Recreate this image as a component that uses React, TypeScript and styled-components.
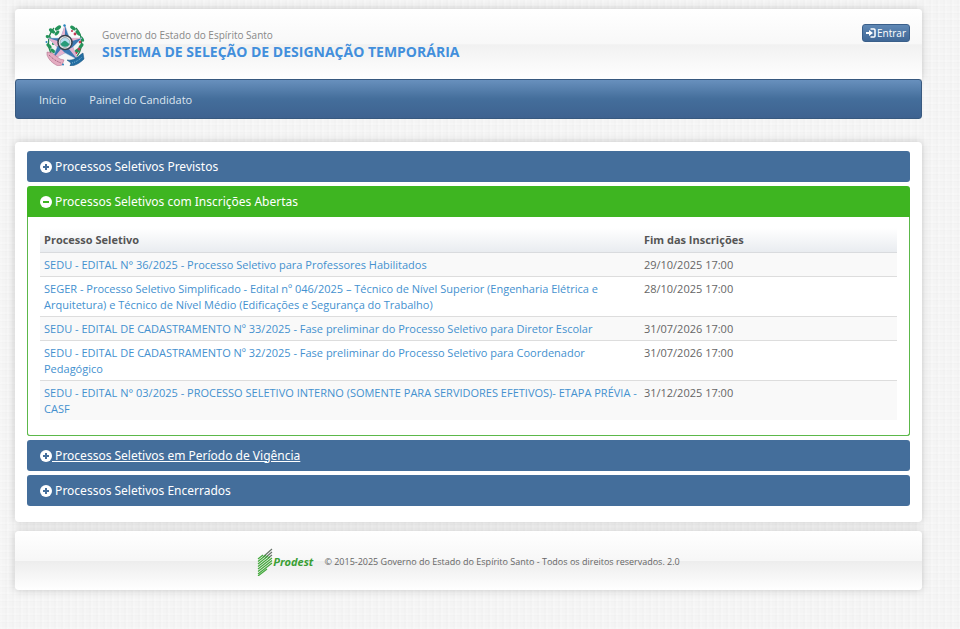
import React, { useState } from "react";
import styled, { createGlobalStyle } from "styled-components";

const GlobalStyle = createGlobalStyle`
  *, *::before, *::after { box-sizing: border-box; }
  body {
    margin: 0;
    font-family: "Open Sans", "Noto Sans", sans-serif;
    font-size: 12px;
    line-height: 16px;
    color: #666;
    background-color: #f4f4f4;
    background-image:
      repeating-linear-gradient(90deg, rgba(255,255,255,.18) 0 2px, transparent 2px 5px, rgba(0,0,0,.006) 5px 7px),
      repeating-linear-gradient(0deg, rgba(255,255,255,.18) 0 2px, transparent 2px 6px, rgba(0,0,0,.006) 6px 7px);
  }
`;

const Page = styled.div`
  padding: 9px 38px 39px 15px;
`;

const shadow = "0 0 8px rgba(0, 0, 0, 0.18)";

const Header = styled.header`
  display: flex;
  align-items: flex-start;
  height: 70px;
  padding: 15px 12px 0 30px;
  border-radius: 4px 4px 0 0;
  background: linear-gradient(#fff 0%, #f8f8f8 50%, #f1f1f1 51%, #fff 100%);
  box-shadow: ${shadow};
`;

const Titles = styled.div`
  flex: 1;
  padding: 3px 0 0 17px;
`;

const Government = styled.div`
  font-size: 10px;
  color: #888;
`;

const SystemName = styled.h1`
  margin: 0;
  font-size: 14px;
  line-height: 18px;
  font-weight: 700;
  color: #428fdc;
`;

const LoginButton = styled.button`
  display: flex;
  align-items: center;
  gap: 1px;
  height: 18px;
  padding: 0 3px;
  border: 1px solid #3a5f8a;
  border-radius: 3px;
  background: linear-gradient(#5f88b5, #3f6796);
  color: #fff;
  font: 10px/16px "Open Sans", sans-serif;
`;

const Nav = styled.nav`
  position: relative;
  display: flex;
  align-items: center;
  gap: 23px;
  height: 40px;
  padding: 2px 23px 0;
  border: 1px solid #38597f;
  border-radius: 3px;
  background: linear-gradient(#6890bd 0%, #446e9b 50%, #3e6290 100%);
`;

const NavLink = styled.a`
  font-size: 11px;
  color: #dde6f0;
  text-decoration: none;
`;

const Main = styled.main`
  display: flex;
  flex-direction: column;
  gap: 4px;
  margin-top: 23px;
  padding: 9px 12px 16px;
  border-radius: 4px;
  background: #fff;
  box-shadow: ${shadow};
`;

const Panel = styled.section<{ $open: boolean }>`
  overflow: hidden;
  border-radius: 3px;
  background: ${(p) => (p.$open ? "#3eb521" : "#446e9b")};
`;

const PanelToggle = styled.button<{ $underlined?: boolean }>`
  display: flex;
  align-items: center;
  width: 100%;
  height: 31px;
  padding: 0 13px;
  border: 0;
  background: none;
  color: #fff;
  font: 12px/18px "Noto Sans", "Open Sans", sans-serif;
  text-align: left;
  white-space: pre;
  text-decoration: ${(p) => (p.$underlined ? "underline" : "none")};
`;

const PanelBody = styled.div`
  padding: 11px 12px 15px;
  border: 1px solid #5cb84a;
  border-top: 0;
  border-radius: 0 0 3px 3px;
  background: #fff;
`;

const Table = styled.table`
  width: 100%;
  table-layout: fixed;
  border-collapse: separate;
  border-spacing: 0;
`;

const HeadCell = styled.th<{ $width: string }>`
  width: ${(p) => p.$width};
  padding: 4px;
  border-bottom: 1px solid #d9dbde;
  background: linear-gradient(#fff, #e9ecf0);
  font-size: 11px;
  font-weight: 700;
  text-align: left;
  color: #555;
`;

const Row = styled.tr`
  &:nth-child(odd) { background: #f9f9f9; }
  &:not(:last-child) > td { border-bottom: 1px solid #ddd; }
`;

const Cell = styled.td`
  padding: 4px 0 3px 4px;
  font-size: 11px;
  vertical-align: top;
`;

const ProcessLink = styled.a`
  color: #4491cf;
  text-decoration: none;
`;

const Footer = styled.footer`
  display: flex;
  align-items: center;
  justify-content: center;
  gap: 11px;
  height: 59px;
  margin-top: 9px;
  padding: 2px 12px 0;
  white-space: nowrap;
  border-radius: 4px;
  background: linear-gradient(#fff 0%, #f7f7f7 50%, #ededed 51%, #fff 100%);
  box-shadow: ${shadow};
`;

const Brand = styled.a`
  display: flex;
  align-items: center;
  color: #3a9f35;
  font-size: 11px;
  font-weight: 700;
  font-style: italic;
  text-decoration: none;
`;

const Copyright = styled.small`
  font-size: 9px;
  color: #666;
`;

function Crest() {
  const star = "M20 1 L24.5 14 L37 14 L28 23 L33 36 L20 29 L7 36 L12 23 L3 14 L15.5 14Z";
  return (
    <svg width="40" height="42" viewBox="0 0 40 42" role="img" aria-label="Brasão do Espírito Santo">
      <path d="M10 34C2 27 1 13 9 4M30 34c8-7 9-21 1-30" fill="none" stroke="#27824f" strokeWidth="1.3" />
      <g fill="#23935a">
        <ellipse cx="13" cy="4" rx="3.5" ry="1.8" transform="rotate(-35 13 4)" />
        <ellipse cx="7" cy="7" rx="3.5" ry="1.8" transform="rotate(35 7 7)" />
        <ellipse cx="12" cy="9" rx="3" ry="1.6" transform="rotate(-50 12 9)" />
        <ellipse cx="3.5" cy="13" rx="3" ry="1.6" transform="rotate(20 3.5 13)" />
        <ellipse cx="4" cy="22" rx="3.2" ry="1.6" transform="rotate(45 4 22)" />
        <ellipse cx="8" cy="27" rx="3.2" ry="1.6" transform="rotate(40 8 27)" />
        <ellipse cx="9" cy="19" rx="2.5" ry="1.4" transform="rotate(-40 9 19)" />
        <ellipse cx="28" cy="4" rx="3.2" ry="1.7" transform="rotate(35 28 4)" />
        <ellipse cx="33" cy="9" rx="3.2" ry="1.7" transform="rotate(50 33 9)" />
        <ellipse cx="37" cy="15" rx="3" ry="1.6" transform="rotate(60 37 15)" />
        <ellipse cx="36" cy="22" rx="3.2" ry="1.7" transform="rotate(-50 36 22)" />
        <ellipse cx="32" cy="27" rx="3.5" ry="1.8" transform="rotate(-40 32 27)" />
      </g>
      <g fill="#c03b55">
        <circle cx="30" cy="10" r="1.4" /><circle cx="35" cy="18" r="1.4" />
        <circle cx="34" cy="25" r="1.5" /><circle cx="27" cy="7" r="1.1" />
        <circle cx="31" cy="29" r="1.3" />
      </g>
      <path d={star} fill="#3c78b2" stroke="#c7dced" strokeWidth=".5" />
      <path d="M20 1v14L15.5 14ZM3 14l13 4-4 5ZM37 14l-13 4 1-4ZM7 36l9-11 4 4ZM33 36l-9-11 4-2Z" fill="#e4b3ce" />
      <circle cx="20" cy="18.5" r="7" fill="#f4f4f4" stroke="#39424e" strokeWidth="1.5" />
      <circle cx="20" cy="18.5" r="5" fill="#b8dfee" stroke="#777" strokeWidth=".5" />
      <path d="M15.5 20c2-1 3-4 5-3s2 2 4 3c-1 3-7 4-9 0Z" fill="#289b79" />
      <path d="M2 28l5 1 8 6 4 1-2 5-4 1C7 39 4 36 2 31Z" fill="#e4acc1" stroke="#a66381" strokeWidth=".5" />
      <path d="M4 31c4 4 7 6 12 8" fill="none" stroke="#935672" strokeWidth="1" strokeDasharray="1 1" />
      <path d="M22 36c8 1 11-4 16-7l1 6c-4 4-9 7-14 7l1-3Z" fill="#236ea2" stroke="#164f7b" strokeWidth=".5" />
      <path d="M27 39c4-1 7-3 10-6" fill="none" stroke="#83b5d4" strokeWidth="1" strokeDasharray="1 1" />
      <g fill="#2584bd"><circle cx="1.5" cy="18" r="1" /><circle cx="18" cy="40.5" r="1" /><circle cx="19.5" cy="1.5" r="1.2" /></g>
    </svg>
  );
}

function LoginIcon() {
  return (
    <svg width="10" height="10" viewBox="0 0 10 10" aria-hidden="true">
      <path d="M4.5 1H8q1 0 1 1v6q0 1-1 1H4.5" fill="none" stroke="#fff" strokeWidth="1.5" />
      <path d="M0 4h3V2l4 3-4 3V6H0Z" fill="#fff" />
    </svg>
  );
}

function SignIcon({ open }: { open: boolean }) {
  return (
    <svg width="12" height="12" viewBox="0 0 12 12" aria-hidden="true">
      <circle cx="6" cy="6" r="6" fill="#fff" />
      <path d={open ? "M3 6h6" : "M3 6h6M6 3v6"} stroke={open ? "#3eb521" : "#446e9b"} strokeWidth="2" />
    </svg>
  );
}

function ProdestMark() {
  return (
    <svg width="16" height="28" viewBox="0 0 16 28" aria-hidden="true">
      <g fill="none" strokeWidth="1.2">
        <path d="M6 9 15 1M8 10l7-6M11 10l4-3" stroke="#69756b" />
        <path d="M1 11l5-4M1 13.5l8-6.5M1 16 11 8M1 18.5 13 9M1 21 15 10M1 23.5 15 12.5M1 26l14-11M1 28l9-7" stroke="#42a83b" />
      </g>
    </svg>
  );
}

const processes = [
  ["SEDU - EDITAL N° 36/2025 - Processo Seletivo para Professores Habilitados", "29/10/2025 17:00"],
  ["SEGER - Processo Seletivo Simplificado - Edital nº 046/2025 – Técnico de Nível Superior (Engenharia Elétrica e Arquitetura) e Técnico de Nível Médio (Edificações e Segurança do Trabalho)", "28/10/2025 17:00"],
  ["SEDU - EDITAL DE CADASTRAMENTO Nº 33/2025 - Fase preliminar do Processo Seletivo para Diretor Escolar", "31/07/2026 17:00"],
  ["SEDU - EDITAL DE CADASTRAMENTO Nº 32/2025 - Fase preliminar do Processo Seletivo para Coordenador Pedagógico", "31/07/2026 17:00"],
  ["SEDU - EDITAL N° 03/2025 - PROCESSO SELETIVO INTERNO (SOMENTE PARA SERVIDORES EFETIVOS)- ETAPA PRÉVIA - CASF", "31/12/2025 17:00"],
];

const sections = [
  { title: "Processos Seletivos Previstos", rows: [] },
  { title: "Processos Seletivos com Inscrições Abertas", rows: processes },
  { title: "Processos Seletivos em Período de Vigência", rows: [], underlined: true },
  { title: "Processos Seletivos Encerrados", rows: [] },
];

function ProcessTable({ rows }: { rows: string[][] }) {
  return (
    <Table>
      <thead>
        <tr>
          <HeadCell $width="70%" scope="col">Processo Seletivo</HeadCell>
          <HeadCell $width="30%" scope="col">Fim das Inscrições</HeadCell>
        </tr>
      </thead>
      <tbody>
        {rows.map(([name, end]) => (
          <Row key={name}>
            <Cell><ProcessLink href="#">{name}</ProcessLink></Cell>
            <Cell>{end}</Cell>
          </Row>
        ))}
      </tbody>
    </Table>
  );
}

export default function App() {
  const [openIndex, setOpenIndex] = useState(1);
  return (
    <>
      <GlobalStyle />
      <Page>
        <Header>
          <Crest />
          <Titles>
            <Government>Governo do Estado do Espírito Santo</Government>
            <SystemName>SISTEMA DE SELEÇÃO DE DESIGNAÇÃO TEMPORÁRIA</SystemName>
          </Titles>
          <LoginButton type="button"><LoginIcon />Entrar</LoginButton>
        </Header>
        <Nav>
          <NavLink href="#">Início</NavLink>
          <NavLink href="#">Painel do Candidato</NavLink>
        </Nav>
        <Main>
          {sections.map((section, i) => {
            const open = i === openIndex;
            return (
              <Panel key={section.title} $open={open}>
                <PanelToggle
                  type="button"
                  aria-expanded={open}
                  $underlined={section.underlined}
                  onClick={() => setOpenIndex(open ? -1 : i)}
                >
                  <SignIcon open={open} />
                  <span>{" " + section.title}</span>
                </PanelToggle>
                {open && <PanelBody><ProcessTable rows={section.rows} /></PanelBody>}
              </Panel>
            );
          })}
        </Main>
        <Footer>
          <Brand href="#"><ProdestMark />Prodest</Brand>
          <Copyright>© 2015-2025 Governo do Estado do Espírito Santo - Todos os direitos reservados. 2.0</Copyright>
        </Footer>
      </Page>
    </>
  );
}
